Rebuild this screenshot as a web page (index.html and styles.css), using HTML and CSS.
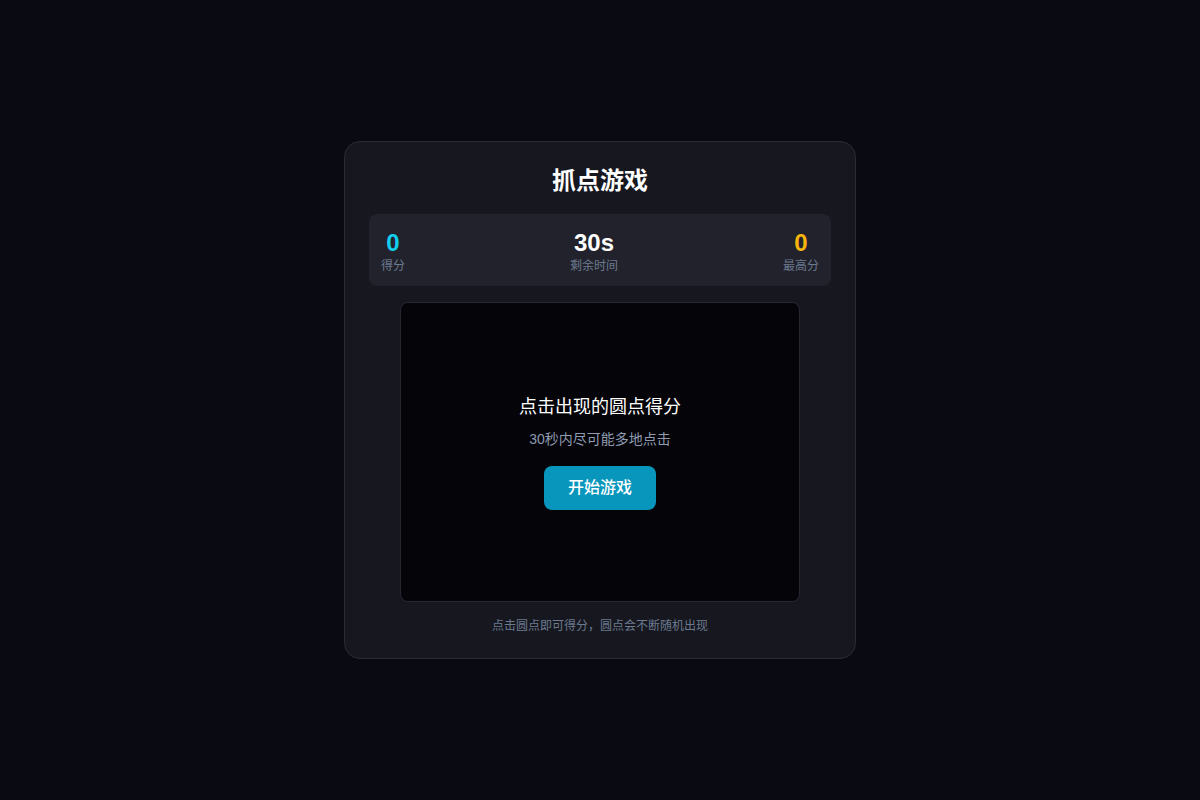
FILE: index.html
```html
<!DOCTYPE html>
<html lang="zh">
<head>
<meta charset="utf-8">
<title>抓点游戏</title>
<link rel="stylesheet" href="styles.css">
</head>
<body>
<main class="page">
  <section class="card">
    <h1 class="title">抓点游戏</h1>
    <div class="stats">
      <div class="stat">
        <div class="stat-value score">0</div>
        <div class="stat-label">得分</div>
      </div>
      <div class="stat">
        <div class="stat-value">30s</div>
        <div class="stat-label">剩余时间</div>
      </div>
      <div class="stat">
        <div class="stat-value best">0</div>
        <div class="stat-label">最高分</div>
      </div>
    </div>
    <div class="arena">
      <div class="intro">
        <div class="intro-title">点击出现的圆点得分</div>
        <div class="intro-sub">30秒内尽可能多地点击</div>
        <button class="start-btn">开始游戏</button>
      </div>
    </div>
    <p class="hint">点击圆点即可得分，圆点会不断随机出现</p>
  </section>
</main>
</body>
</html>
```

FILE: styles.css
```css
* { box-sizing: border-box; }
html, body {
  margin: 0;
  padding: 0;
  height: 100%;
}
body {
  background: #0a0b12;
  font-family: "Liberation Sans", "Noto Sans CJK SC", sans-serif;
  color: #ffffff;
}
.page {
  height: 800px;
  display: flex;
  align-items: center;
  justify-content: center;
}
.card {
  width: 512px;
  background: #16171f;
  border: 1px solid #2a2b36;
  border-radius: 16px;
  padding: 24px 24px 24px;
  display: flex;
  flex-direction: column;
  align-items: center;
}
.title {
  margin: 0 0 18px;
  font-size: 24px;
  line-height: 30px;
  font-weight: 700;
  color: #ffffff;
}
.stats {
  width: 100%;
  background: #21222b;
  border-radius: 8px;
  padding: 12px;
  display: flex;
  justify-content: space-between;
}
.stat {
  text-align: center;
}
.stat-value {
  font-size: 24px;
  line-height: 32px;
  font-weight: 700;
  color: #ffffff;
  padding-top: 1px;
  margin-bottom: -1px;
}
.stat-value.score { color: #14cdec; }
.stat-value.best { color: #f7b50c; }
.stat-label {
  font-size: 12px;
  line-height: 16px;
  color: #6c7a8f;
}
.arena {
  margin-top: 16px;
  width: 400px;
  height: 300px;
  background: #040409;
  border: 1px solid #262731;
  border-radius: 8px;
  display: flex;
  align-items: center;
  justify-content: center;
}
.intro {
  display: flex;
  flex-direction: column;
  align-items: center;
}
.intro-title {
  font-size: 18px;
  line-height: 27px;
  color: #ffffff;
}
.intro-sub {
  margin-top: 8px;
  font-size: 14px;
  line-height: 21px;
  color: #8f9bb0;
}
.start-btn {
  margin-top: 16px;
  height: 44px;
  padding: 0 24px;
  border: none;
  border-radius: 8px;
  background: #0896bc;
  color: #ffffff;
  font-family: inherit;
  font-size: 16px;
  font-weight: 500;
  line-height: 20px;
  cursor: pointer;
}
.hint {
  margin: 16px 0 0;
  font-size: 12px;
  line-height: 16px;
  color: #6c7a8f;
}
```
